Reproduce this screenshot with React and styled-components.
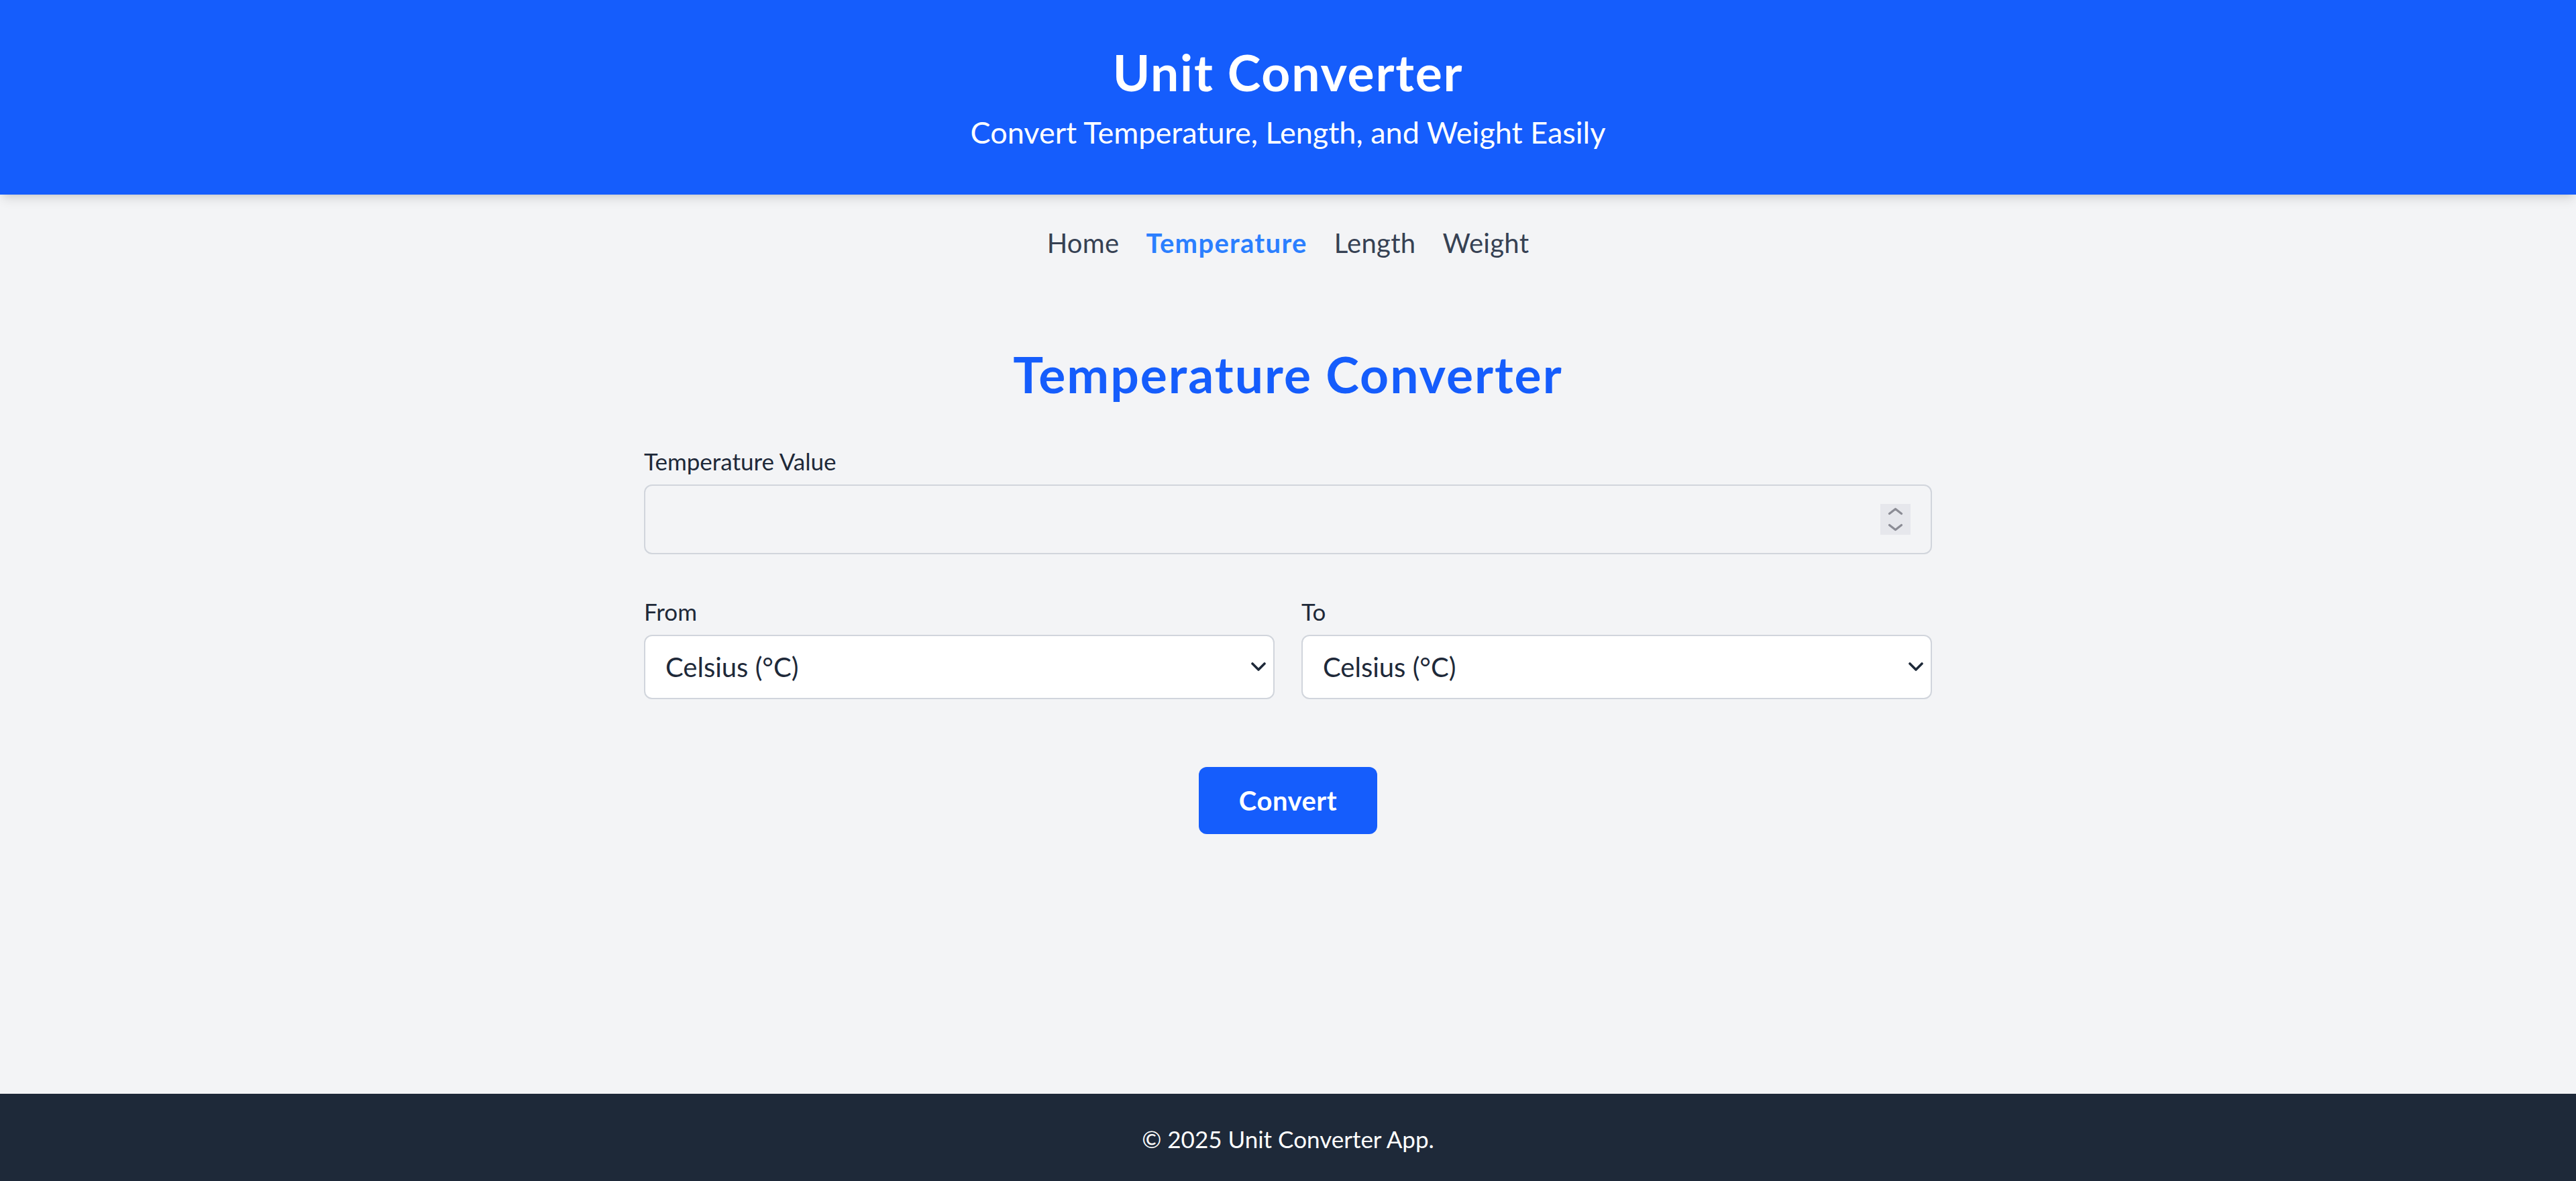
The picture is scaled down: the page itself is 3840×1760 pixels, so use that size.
import React from "react";
import styled, { createGlobalStyle } from "styled-components";

const GlobalStyle = createGlobalStyle`
  html, body {
    margin: 0;
    padding: 0;
  }
  body {
    background: #f3f4f6;
    font-family: Lato, "Open Sans", "Noto Sans", sans-serif;
    color: #1e2939;
  }
  * { box-sizing: border-box; }
`;

const Page = styled.div`
  min-height: 1760px;
  display: flex;
  flex-direction: column;
`;

const Header = styled.header`
  position: relative;
  z-index: 1;
  background: #155dfc;
  color: #ffffff;
  text-align: center;
  padding: 62px 0 58px;
  box-shadow: 0 10px 15px -2.5px rgba(0, 0, 0, 0.1), 0 5px 10px -5px rgba(0, 0, 0, 0.1);
`;

const Title = styled.h1`
  margin: 0;
  font-size: 75px;
  line-height: 90px;
  font-weight: 700;
  letter-spacing: 1.8px;
`;

const Subtitle = styled.p`
  margin: 10px 0 0;
  font-size: 45px;
  line-height: 70px;
  font-weight: 400;
`;

const Nav = styled.nav`
  display: flex;
  justify-content: center;
  gap: 40px;
  padding: 42px 0 38px;
`;

const NavLink = styled.a`
  font-size: 40px;
  line-height: 60px;
  text-decoration: none;
  cursor: pointer;
  color: ${(p) => (p.$active ? "#2b7fff" : "#364153")};
  font-weight: ${(p) => (p.$active ? 700 : 400)};
  letter-spacing: ${(p) => (p.$active ? "1.3px" : "0.3px")};
`;

const Main = styled.main`
  flex: 1;
  padding-top: 82px;
`;

const Container = styled.div`
  width: 1920px;
  margin: 0 auto;
`;

const Heading = styled.h2`
  margin: 0 0 60px;
  text-align: center;
  color: #155dfc;
  font-size: 75px;
  line-height: 90px;
  font-weight: 700;
  letter-spacing: 2px;
`;

const Form = styled.form`
  display: flex;
  flex-direction: column;
  gap: 60px;
`;

const Field = styled.div`
  display: flex;
  flex-direction: column;
  gap: 10px;
`;

const Label = styled.label`
  font-size: 35px;
  line-height: 50px;
  color: #1e2939;
`;

const InputBox = styled.div`
  display: flex;
  align-items: center;
  height: 104px;
  border: 2.5px solid #d1d5dc;
  border-radius: 12px;
  padding: 0 30px;
  background: transparent;
`;

const NumberInput = styled.input`
  flex: 1;
  min-width: 0;
  border: none;
  outline: none;
  background: transparent;
  font-family: inherit;
  font-size: 40px;
  line-height: 60px;
  color: #1e2939;
  padding: 0;
  -moz-appearance: textfield;
  &::-webkit-inner-spin-button,
  &::-webkit-outer-spin-button {
    -webkit-appearance: none;
    margin: 0;
  }
`;

const Spinner = styled.svg`
  flex: none;
  display: block;
`;

const Row = styled.div`
  display: grid;
  grid-template-columns: 1fr 1fr;
  gap: 40px;
`;

const SelectWrap = styled.div`
  position: relative;
`;

const Select = styled.select`
  display: block;
  width: 100%;
  height: 96px;
  appearance: none;
  -webkit-appearance: none;
  border: 2.5px solid #d1d5dc;
  border-radius: 12px;
  background: #ffffff;
  padding: 0 30px;
  font-family: inherit;
  font-size: 40px;
  color: #1e2939;
  outline: none;
`;

const Chevron = styled.svg`
  position: absolute;
  right: 13px;
  top: 50%;
  transform: translateY(-50%);
  pointer-events: none;
`;

const ButtonRow = styled.div`
  display: flex;
  justify-content: center;
  margin-top: 41px;
`;

const Button = styled.button`
  height: 100px;
  padding: 0 60px;
  border: none;
  border-radius: 12px;
  background: #155dfc;
  color: #ffffff;
  font-family: inherit;
  font-size: 40px;
  font-weight: 700;
  letter-spacing: 0.5px;
  cursor: pointer;
`;

const Footer = styled.footer`
  background: #1e2939;
  color: #ffffff;
  text-align: center;
  padding: 42px 0 38px;
  font-size: 35px;
  line-height: 50px;
`;

const units = ["Celsius (°C)", "Fahrenheit (°F)", "Kelvin (K)"];

function UnitSelect({ id }) {
  return (
    <SelectWrap>
      <Select id={id} defaultValue={units[0]}>
        {units.map((u) => (
          <option key={u}>{u}</option>
        ))}
      </Select>
      <Chevron width="22" height="14" viewBox="0 0 22 14">
        <polyline
          points="2,2 11,11 20,2"
          fill="none"
          stroke="#1e2939"
          strokeWidth="3.6"
          strokeLinecap="round"
          strokeLinejoin="round"
        />
      </Chevron>
    </SelectWrap>
  );
}

export default function App() {
  return (
    <>
      <GlobalStyle />
      <Page>
        <Header>
          <Title>Unit Converter</Title>
          <Subtitle>Convert Temperature, Length, and Weight Easily</Subtitle>
        </Header>
        <Nav>
          <NavLink>Home</NavLink>
          <NavLink $active>Temperature</NavLink>
          <NavLink>Length</NavLink>
          <NavLink>Weight</NavLink>
        </Nav>
        <Main>
          <Container>
            <Heading>Temperature Converter</Heading>
            <Form onSubmit={(e) => e.preventDefault()}>
              <Field>
                <Label htmlFor="temp">Temperature Value</Label>
                <InputBox>
                  <NumberInput id="temp" type="number" />
                  <Spinner width="45" height="46" viewBox="0 0 45 46">
                    <rect width="45" height="46" fill="#e6e7ec" />
                    <polyline points="13.5,14.5 22.5,7.5 31.5,14.5" fill="none" stroke="#8b8c95" strokeWidth="3.2" strokeLinecap="round" strokeLinejoin="round" />
                    <polyline points="13.5,31.5 22.5,38.5 31.5,31.5" fill="none" stroke="#8b8c95" strokeWidth="3.2" strokeLinecap="round" strokeLinejoin="round" />
                  </Spinner>
                </InputBox>
              </Field>
              <Row>
                <Field>
                  <Label htmlFor="from">From</Label>
                  <UnitSelect id="from" />
                </Field>
                <Field>
                  <Label htmlFor="to">To</Label>
                  <UnitSelect id="to" />
                </Field>
              </Row>
              <ButtonRow>
                <Button type="submit">Convert</Button>
              </ButtonRow>
            </Form>
          </Container>
        </Main>
        <Footer>© 2025 Unit Converter App.</Footer>
      </Page>
    </>
  );
}
